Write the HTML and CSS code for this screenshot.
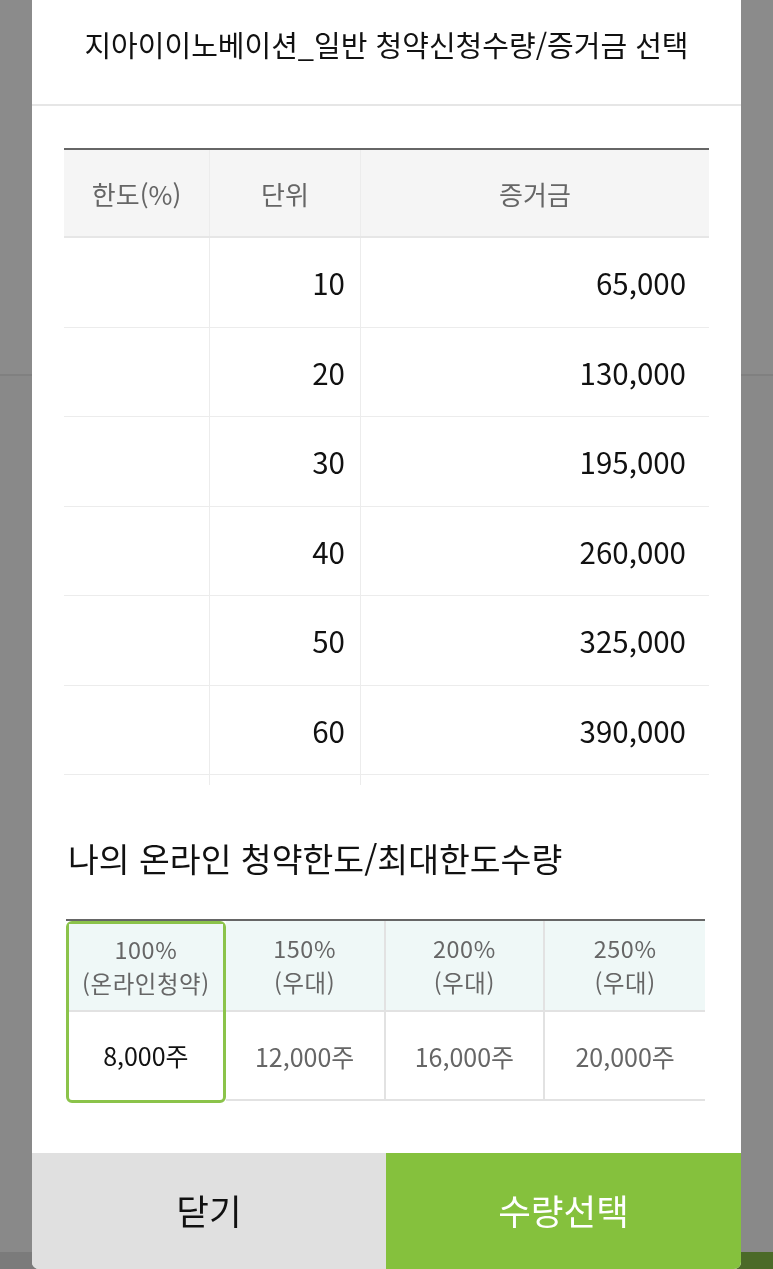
FILE: index.html
```html
<!DOCTYPE html>
<html lang="ko">
<head>
<meta charset="utf-8">
<title>청약신청수량/증거금 선택</title>
<link rel="stylesheet" href="styles.css">
</head>
<body>
<div class="page">
  <div class="page-top"></div>
  <div class="page-mid"></div>
  <div class="page-bottom">
    <div class="pb-left"></div>
    <div class="pb-right"></div>
  </div>
</div>

<div class="modal">
  <div class="modal-head">
    <h1 class="modal-title">지아이이노베이션_일반 청약신청수량/증거금 선택</h1>
  </div>
  <div class="modal-body">
    <div class="unit-table">
      <div class="ut-row ut-head">
        <div class="ut-cell">한도(%)</div>
        <div class="ut-cell">단위</div>
        <div class="ut-cell">증거금</div>
      </div>
      <div class="ut-row"><div class="ut-cell"></div><div class="ut-cell num">10</div><div class="ut-cell num wide">65,000</div></div>
      <div class="ut-row"><div class="ut-cell"></div><div class="ut-cell num">20</div><div class="ut-cell num wide">130,000</div></div>
      <div class="ut-row"><div class="ut-cell"></div><div class="ut-cell num">30</div><div class="ut-cell num wide">195,000</div></div>
      <div class="ut-row"><div class="ut-cell"></div><div class="ut-cell num">40</div><div class="ut-cell num wide">260,000</div></div>
      <div class="ut-row"><div class="ut-cell"></div><div class="ut-cell num">50</div><div class="ut-cell num wide">325,000</div></div>
      <div class="ut-row"><div class="ut-cell"></div><div class="ut-cell num">60</div><div class="ut-cell num wide">390,000</div></div>
      <div class="ut-row"><div class="ut-cell"></div><div class="ut-cell num"></div><div class="ut-cell num wide"></div></div>
    </div>

    <h2 class="section-title">나의 온라인 청약한도/최대한도수량</h2>

    <div class="limit-table">
      <div class="lt-col selected">
        <div class="lt-head"><div class="lt-line">100%</div><div class="lt-line">(온라인청약)</div></div>
        <div class="lt-val">8,000주</div>
      </div>
      <div class="lt-col">
        <div class="lt-head"><div class="lt-line">150%</div><div class="lt-line">(우대)</div></div>
        <div class="lt-val">12,000주</div>
      </div>
      <div class="lt-col">
        <div class="lt-head"><div class="lt-line">200%</div><div class="lt-line">(우대)</div></div>
        <div class="lt-val">16,000주</div>
      </div>
      <div class="lt-col last">
        <div class="lt-head"><div class="lt-line">250%</div><div class="lt-line">(우대)</div></div>
        <div class="lt-val">20,000주</div>
      </div>
    </div>
  </div>
  <div class="modal-foot">
    <button class="btn btn-close" type="button">닫기</button>
    <button class="btn btn-ok" type="button">수량선택</button>
  </div>
</div>
</body>
</html>
```

FILE: styles.css
```css
* { box-sizing: border-box; }
html, body { margin: 0; padding: 0; }
body {
  width: 773px;
  height: 1269px;
  overflow: hidden;
  background: #898989;
  font-family: "Noto Sans CJK KR", "Noto Sans", sans-serif;
}

/* underlying dimmed page */
.page {
  height: 1269px;
  display: flex;
  flex-direction: column;
}
.page-top {
  height: 376px;
  background: #8b8b8b;
  border-bottom: 2px solid #808080;
}
.page-mid { flex: 1; background: #898989; }
.page-bottom {
  height: 17px;
  display: grid;
  grid-template-columns: 1fr 1fr;
}
.pb-left { background: #7b7b7b; }
.pb-right { background: #4b6a28; }

/* modal */
.modal {
  position: fixed;
  left: 32px;
  top: 0;
  bottom: 0;
  width: 709px;
  background: #fff;
  border-radius: 0 0 7px 7px;
  overflow: hidden;
  display: flex;
  flex-direction: column;
}
.modal-head {
  height: 106px;
  border-bottom: 2px solid #e6e6e6;
  padding-top: 23px;
}
.modal-title {
  margin: 0;
  text-align: center;
  font-size: 29px;
  line-height: 42px;
  font-weight: 400;
  color: #111;
  letter-spacing: 0;
}
.modal-body {
  padding: 42px 32px 0 32px;
}

/* unit table */
.unit-table {
  height: 637px;
  overflow: hidden;
  border-top: 2px solid #666;
}
.ut-row {
  display: grid;
  grid-template-columns: 146px 151px 1fr;
  height: 89.5px;
  border-bottom: 1px solid #ececec;
}
.ut-head {
  height: 88px;
  background: #f5f5f5;
  border-bottom: 2px solid #e6e6e6;
}
.ut-cell {
  border-right: 1px solid #ececec;
  display: flex;
  align-items: center;
  justify-content: center;
  font-size: 26px;
  color: #666;
}
.ut-cell:last-child { border-right: 0; }
.ut-cell.num {
  justify-content: flex-end;
  padding-right: 15px;
  font-size: 29.5px;
  color: #111;
}
.ut-cell.num.wide { padding-right: 23px; }

.section-title {
  margin: 50px 0 0 4px;
  font-size: 33.5px;
  line-height: 46px;
  font-weight: 400;
  color: #111;
  letter-spacing: 0;
}

/* limit table */
.limit-table {
  margin: 38px 4px 0 2px;
  border-top: 2px solid #666;
  display: grid;
  grid-template-columns: repeat(4, 1fr);
}
.lt-col {
  border-right: 2px solid #e2e2e2;
  border-bottom: 2px solid #e2e2e2;
  display: flex;
  flex-direction: column;
}
.lt-col.last { border-right: 0; }
.lt-head {
  height: 91px;
  background: #eff8f7;
  border-bottom: 2px solid #e2e2e2;
  display: flex;
  flex-direction: column;
  align-items: center;
  justify-content: center;
  text-align: center;
  font-size: 23.4px;
  color: #666;
  padding-bottom: 2px;
}
.lt-line {
  line-height: 34px;
  height: 34px;
  letter-spacing: 0.6px;
}
.lt-val {
  height: 87px;
  display: flex;
  align-items: center;
  justify-content: center;
  font-size: 25px;
  color: #666;
}
.lt-col.selected {
  border: 3px solid #8bc34a;
  border-radius: 6px;
  margin-bottom: -2px;
}
.lt-col.selected .lt-head { height: 88px; border-bottom-color: #e2e2e2; }
.lt-col.selected .lt-val { color: #111; height: 86px; }

/* footer buttons */
.modal-foot {
  margin-top: auto;
  height: 116px;
  display: grid;
  grid-template-columns: 354px 1fr;
}
.btn {
  border: 0;
  margin: 0;
  font-family: inherit;
  font-size: 35.5px;
  font-weight: 400;
  padding: 0 0 4px 0;
}
.btn-close { background: #e0e0e0; color: #111; }
.btn-ok { background: #85c13d; color: #fff; }
```
